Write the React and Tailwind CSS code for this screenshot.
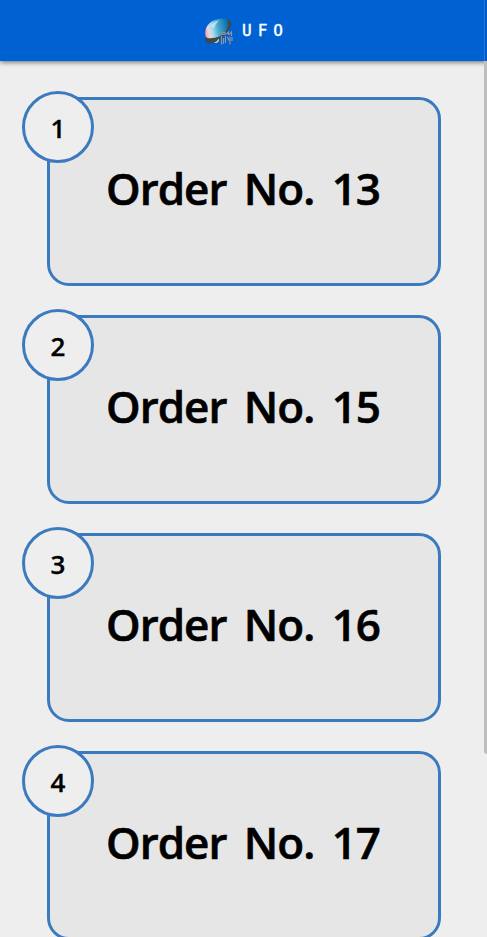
const orders = [13, 15, 16, 17];

function UfoIcon() {
  return (
    <svg className="h-[30px] w-[30px] shrink-0" viewBox="0 0 30 30">
      <defs>
        <linearGradient id="dome" gradientUnits="userSpaceOnUse" x1="1" y1="16" x2="24" y2="11">
          <stop offset="0" stopColor="#ee9eaa" />
          <stop offset="0.15" stopColor="#efd3dc" />
          <stop offset="0.32" stopColor="#a9dcec" />
          <stop offset="0.58" stopColor="#48a9d0" />
          <stop offset="1" stopColor="#0e6fa8" />
        </linearGradient>
      </defs>
      <ellipse cx="14.4" cy="15.6" rx="16" ry="6.8" transform="rotate(-42 14.4 15.6)" fill="#454745" />
      <path d="M10 26.5Q13.5 26 14.5 22.5Q16 25.5 12 27Z" fill="#f3ee8e" />
      <path d="M1.5 20C0 12 5 4 15 3C20 2.5 24 3.5 24 5C26 13 19 20 12 21.5C7 22.5 2.5 23 1.5 20Z" fill="url(#dome)" />
      <path d="M7 10Q10 5 15 4.5Q12 7 10 12Z" fill="#e3f6fb" opacity="0.6" />
      <g stroke="#96929b" strokeWidth="1.2" fill="none">
        <path d="M17 16.5h4v2h-3M22.5 18l2-2v3M25.5 18.5l2-2.5v4M17.5 20v8.5M19.5 22v6M21.5 20v7M23.5 21l1.5 3.5M26 20.5v8M28 21v4" />
      </g>
    </svg>
  );
}

function OrderCard({ position, number }) {
  return (
    <section className="relative flex h-[189px] w-[394px] justify-center rounded-[22px] border-[3px] border-[#3c7abf] bg-[#e6e6e6]">
      <div className="absolute -left-7 -top-[9px] flex h-[72px] w-[72px] items-center justify-center rounded-full border-[3px] border-[#3c7abf] bg-[#eeeeee] pt-0.5 text-[26px] font-semibold [-webkit-text-stroke:0.3px_black]">
        {position}
      </div>
      <h2 className="mt-[58px] whitespace-nowrap pr-0.5 text-[44px] font-semibold leading-[60px] tracking-[-1px] [-webkit-text-stroke:0.6px_black] [word-spacing:7px]">
        Order No. {number}
      </h2>
    </section>
  );
}

export default function App() {
  return (
    <div className="relative h-[937px] w-[487px] overflow-hidden bg-[#eeeeee] font-['Open_Sans','Noto_Sans',sans-serif] text-black">
      <header className="relative flex h-[61px] items-center justify-center bg-[#0061d3] shadow-[0_1px_5px_rgba(0,0,0,0.6)]">
        <div className="flex items-center gap-2 pl-1.5">
          <UfoIcon />
          <span className="font-['DejaVu_Sans_Mono',monospace] text-[16px] leading-5 tracking-[6px] text-white [-webkit-text-stroke:0.4px_white]">UFO</span>
        </div>
      </header>
      <main className="ml-[47px] mt-9 flex flex-col gap-[29px]">
        {orders.map((number, i) => (
          <OrderCard key={number} position={i + 1} number={number} />
        ))}
      </main>
      <div className="absolute right-0 top-0 h-[61px] w-[3px] border-l border-[#2678da] bg-[#0059c2]" />
      <div className="absolute right-0 top-[61px] h-[693px] w-[3px] rounded-bl-[3px] bg-[#bebebe]" />
    </div>
  );
}
